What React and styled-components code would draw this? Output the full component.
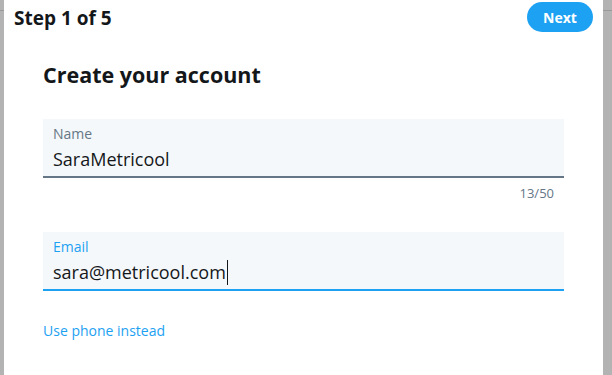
import styled, { createGlobalStyle } from "styled-components";

const GlobalStyle = createGlobalStyle`
  html, body {
    margin: 0;
    padding: 0;
    height: 100%;
  }
  body {
    background: linear-gradient(#b3b3b3 0 10px, #9a9a9a 10px 11px, #b3b3b3 11px);
    font-family: "Open Sans", "Noto Sans", sans-serif;
    overflow: hidden;
  }
`;

const Modal = styled.div`
  margin-left: 4px;
  width: 599px;
  height: 375px;
  background: #fff;
  display: flex;
  flex-direction: column;
`;

const Header = styled.header`
  height: 34px;
  padding: 2px 10px 0 10px;
  box-sizing: border-box;
  display: flex;
  justify-content: space-between;
  align-items: flex-start;
`;

const Step = styled.h2`
  margin: 4px 0 0;
  font-size: 19px;
  font-weight: 700;
  color: #14171a;
  line-height: 24px;
`;

const NextButton = styled.button`
  width: 66px;
  height: 30px;
  border: none;
  border-radius: 15px;
  background: #1da1f2;
  color: #fff;
  font-family: inherit;
  font-size: 14px;
  font-weight: 700;
  cursor: pointer;
`;

const Body = styled.div`
  padding: 27px 39px 0 39px;
  display: flex;
  flex-direction: column;
`;

const Title = styled.h1`
  margin: 0 0 30px;
  font-size: 21.5px;
  font-weight: 700;
  color: #14171a;
  line-height: 28px;
`;

const Field = styled.div`
  background: #f5f8fa;
  border-bottom: 2px solid ${(p) => (p.$focused ? "#1da1f2" : "#657786")};
  padding: 6px 10px 4px;
  display: flex;
  flex-direction: column;
`;

const Label = styled.label`
  font-size: 14px;
  line-height: 18px;
  color: ${(p) => (p.$focused ? "#1da1f2" : "#657786")};
`;

const Value = styled.div`
  margin-top: 3px;
  font-size: 18px;
  line-height: 26px;
  color: #14171a;
  display: flex;
  align-items: center;
`;

const Caret = styled.span`
  display: inline-block;
  width: 1px;
  height: 25px;
  background: #14171a;
  margin-left: 1px;
`;

const Counter = styled.div`
  text-align: right;
  padding-right: 10px;
  margin: 6px 0 30px;
  font-size: 13px;
  line-height: 18px;
  color: #657786;
`;

const Link = styled.a`
  margin-top: 31px;
  font-size: 14px;
  line-height: 18px;
  color: #1da1f2;
  text-decoration: none;
  cursor: pointer;
`;

export default function App() {
  return (
    <>
      <GlobalStyle />
      <Modal>
        <Header>
          <Step>Step 1 of 5</Step>
          <NextButton>Next</NextButton>
        </Header>
        <Body>
          <Title>Create your account</Title>
          <Field>
            <Label>Name</Label>
            <Value>SaraMetricool</Value>
          </Field>
          <Counter>13/50</Counter>
          <Field $focused>
            <Label $focused>Email</Label>
            <Value>
              sara@metricool.com
              <Caret />
            </Value>
          </Field>
          <Link>Use phone instead</Link>
        </Body>
      </Modal>
    </>
  );
}
